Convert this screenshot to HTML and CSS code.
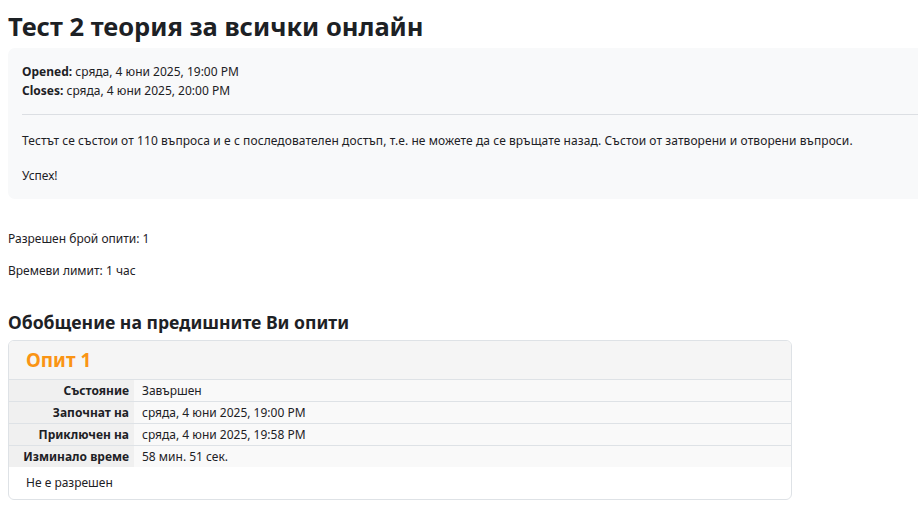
FILE: index.html
```html
<!DOCTYPE html>
<html lang="bg">
<head>
<meta charset="utf-8">
<title>Тест 2 теория за всички онлайн</title>
<link rel="stylesheet" href="styles.css">
</head>
<body>
<main class="page">
  <h2 class="title">Тест 2 теория за всички онлайн</h2>
  <section class="activity-box">
    <div class="dates">
      <div><strong>Opened:</strong> сряда, 4 юни 2025, 19:00 PM</div>
      <div><strong>Closes:</strong> сряда, 4 юни 2025, 20:00 PM</div>
    </div>
    <hr class="divider">
    <div class="intro">
      <p>Тестът се състои от 110 въпроса и е с последователен достъп, т.е. не можете да се връщате назад. Състои от затворени и отворени въпроси.</p>
      <p>Успех!</p>
    </div>
  </section>
  <div class="info">
    <p>Разрешен брой опити: 1</p>
    <p>Времеви лимит: 1 час</p>
  </div>
  <h3 class="subtitle">Обобщение на предишните Ви опити</h3>
  <section class="card">
    <div class="card-header">Опит 1</div>
    <table class="summary">
      <tr><th>Състояние</th><td>Завършен</td></tr>
      <tr><th>Започнат на</th><td>сряда, 4 юни 2025, 19:00 PM</td></tr>
      <tr><th>Приключен на</th><td>сряда, 4 юни 2025, 19:58 PM</td></tr>
      <tr><th>Изминало време</th><td>58 мин. 51 сек.</td></tr>
    </table>
    <div class="card-footer">Не е разрешен</div>
  </section>
</main>
</body>
</html>
```

FILE: styles.css
```css
html, body {
  margin: 0;
  padding: 0;
  overflow: hidden;
  background: #fff;
}
body {
  font-family: "Noto Sans", "Open Sans", sans-serif;
  font-size: 12px;
  line-height: 19px;
  color: #1d2125;
}
.page {
  padding: 0 8px;
}
.title {
  margin: 0;
  padding-top: 9px;
  font-size: 25.5px;
  line-height: 34px;
  font-weight: 700;
  height: 39px;
}
.activity-box {
  width: 940px;
  background: #f8f9fa;
  border-radius: 7px;
  padding: 14px 14px;
  box-sizing: border-box;
}
.dates strong { font-weight: 700; }
.divider {
  border: 0;
  border-top: 1px solid #dcdfe3;
  margin: 14px 0 16px;
}
.intro p { margin: 0 0 16px; }
.intro p:last-child { margin-bottom: 0; }
.intro p:first-child { letter-spacing: 0.08px; }
.info {
  padding-top: 30px;
}
.info p { margin: 0 0 13px; }
.subtitle {
  margin: 30px 0 0;
  font-size: 17.6px;
  line-height: 24px;
  font-weight: 700;
}
.card {
  margin-top: 6px;
  width: 784px;
  box-sizing: border-box;
  border: 1px solid #dee2e6;
  border-radius: 6px;
  overflow: hidden;
}
.card-header {
  background: #f5f5f5;
  color: #fa9414;
  font-weight: 700;
  font-size: 19px;
  line-height: 38px;
  padding: 0 17px;
  border-bottom: 1px solid #dee2e6;
}
.summary {
  width: 100%;
  border-collapse: collapse;
}
.summary th, .summary td {
  height: 21px;
  border-top: 1px solid #dee2e6;
  line-height: 19px;
}
.summary tr:first-child th, .summary tr:first-child td { border-top: 0; }
.summary th {
  background: #f0f0f0;
  text-align: right;
  font-weight: 700;
  white-space: nowrap;
  width: 120px;
  padding: 0 5px 0 0;
}
.summary td {
  background: #f9f9f9;
  text-align: left;
  padding: 0 8px;
}
.card-footer {
  padding: 6px 17px 7px;
  line-height: 19px;
}
```
